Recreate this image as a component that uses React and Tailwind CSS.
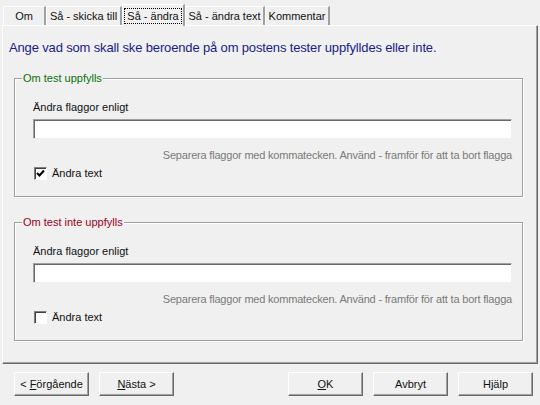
import React from 'react';

const tabs = [
  { label: 'Om', w: 'w-[43px]' },
  { label: 'Så - skicka till', w: 'w-[76px]' },
  { label: 'Så - ändra', w: 'w-[63px]', active: true },
  { label: 'Så - ändra text', w: 'w-[80px]' },
  { label: 'Kommentar', w: 'w-[65px]' },
];

const Tab = ({ label, w, active }) => {
  if (active) {
    return (
      <div className={`${w} h-[22px] -mb-[1px] relative z-10 bg-[#f0f0f0] border-l border-t border-white border-r-2 border-r-[#a0a0a0] flex items-center justify-center`}>
        <span className="px-[2px] leading-[14px] outline outline-1 outline-dotted outline-black">{label}</span>
      </div>
    );
  }
  return (
    <div className={`${w} h-[19px] bg-[#f0f0f0] border-l border-t border-white border-r-2 border-r-[#a0a0a0] flex items-center justify-center`}>
      <span className="leading-[14px]">{label}</span>
    </div>
  );
};

const Checkbox = ({ checked }) => (
  <div className="w-[13px] h-[13px] bg-white border border-t-[#808080] border-l-[#808080] border-b-white border-r-white shadow-[inset_1px_1px_0_#404040] flex items-center justify-center">
    {checked && (
      <svg width="9" height="9" viewBox="0 0 9 9">
        <path d="M1 4 L3.5 6.5 L8 1.5" fill="none" stroke="#000" strokeWidth="2" />
      </svg>
    )}
  </div>
);

const GroupBox = ({ title, titleColor, checked }) => (
  <div className="relative ml-[11px] mr-[14px] h-[119px] border border-[#a0a0a0] shadow-[inset_1px_1px_0_#fff,1px_1px_0_#fff] pl-[18px] pr-[10px] pt-[21px]">
    <span className={`absolute left-[7px] -top-[8px] bg-[#f0f0f0] px-[1px] leading-[14px] ${titleColor}`}>{title}</span>
    <div className="leading-[14px] h-[14px]">Ändra flaggor enligt</div>
    <div className="mt-[5px] h-[20px] bg-white border border-t-[#a0a0a0] border-l-[#a0a0a0] border-b-[#f0f0f0] border-r-[#f0f0f0] shadow-[inset_1px_1px_0_#696969]" />
    <div className="mt-[9px] text-right text-[#7a7a7a] leading-[14px] tracking-[-0.2px]">
      Separera flaggor med kommatecken. Använd - framför för att ta bort flagga
    </div>
    <div className="mt-[4px] flex items-center gap-[5px] pl-[1px]">
      <Checkbox checked={checked} />
      <span className="leading-[14px]">Ändra text</span>
    </div>
  </div>
);

const Button = ({ children }) => (
  <button className="w-[75px] h-[24px] bg-[#f0f0f0] border border-t-white border-l-white border-b-[#696969] border-r-[#696969] shadow-[inset_-1px_-1px_0_#a0a0a0] flex items-center justify-center leading-[14px] whitespace-pre">
    {children}
  </button>
);

export default function App() {
  return (
    <div className="w-[540px] h-[405px] bg-[#f0f0f0] text-[#111] text-[11px] font-['Liberation_Sans',Arial,sans-serif] overflow-hidden">
      <div className="flex items-end pl-[3px] pt-[3px] h-[25px]">
        {tabs.map((t) => (
          <Tab key={t.label} {...t} />
        ))}
      </div>
      <div className="mx-[2px] h-[339px] border border-t-white border-l-white border-b-[#696969] border-r-[#696969] shadow-[inset_-1px_-1px_0_#a0a0a0]">
        <div className="pt-[14px] pl-[6px] h-[52px] text-[13px] leading-[16px] text-[#1a1a8a] tracking-[-0.15px]">
          Ange vad som skall ske beroende på om postens tester uppfylldes eller inte.
        </div>
        <GroupBox title="Om test uppfylls" titleColor="text-[#0a700a]" checked />
        <div className="h-[25px]" />
        <GroupBox title="Om test inte uppfylls" titleColor="text-[#9a0020]" />
      </div>
      <div className="flex mt-[8px] pl-[14px] pr-[7px]">
        <div className="flex gap-[10px]">
          <Button>{'< '}<u>F</u>örgående</Button>
          <Button><u>N</u>{'ästa >'}</Button>
        </div>
        <div className="flex-1" />
        <div className="flex gap-[10px]">
          <Button><u>O</u>K</Button>
          <Button>Avbryt</Button>
          <Button>Hjälp</Button>
        </div>
      </div>
    </div>
  );
}
